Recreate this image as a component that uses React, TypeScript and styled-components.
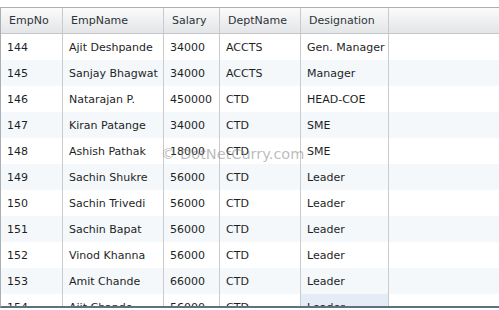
import React from "react";
import styled, { createGlobalStyle } from "styled-components";

const Global = createGlobalStyle`
  html, body { margin: 0; padding: 0; background: #ffffff; }
  body { font-family: "DejaVu Sans", Verdana, sans-serif; }
`;

const cols = "62px 101px 56px 81px 88px 1fr";

const Frame = styled.div`
  margin-top: 7px;
  height: 301px;
  box-sizing: border-box;
  border-top: 1px solid #a9afb5;
  border-left: 1px solid #a9afb5;
  border-bottom: 2px solid #5d717e;
  overflow: hidden;
  position: relative;
`;

const HeaderRow = styled.div`
  display: grid;
  grid-template-columns: ${cols};
  height: 26px;
  box-sizing: border-box;
  border-bottom: 1px solid #c3c7cb;
  background: linear-gradient(#fbfbfb, #e3e5e7);
`;

const HeadCell = styled.div`
  display: flex;
  align-items: center;
  padding-left: 8px;
  font-size: 11px;
  color: #2e3338;
  box-sizing: border-box;
  border-right: 1px solid #c8cbce;
  white-space: nowrap;
  overflow: hidden;
`;

const HeadFill = styled.div``;

const Row = styled.div<{ $alt: boolean }>`
  display: grid;
  grid-template-columns: ${cols};
  height: 26px;
  background: ${(p) => (p.$alt ? "#f4f8fb" : "#ffffff")};
`;

const Cell = styled.div<{ $hl?: boolean }>`
  display: flex;
  align-items: center;
  padding-left: 6px;
  font-size: 11px;
  color: #1f1f1f;
  box-sizing: border-box;
  border-right: 1px solid #cbcbcb;
  white-space: nowrap;
  overflow: hidden;
  background: ${(p) => (p.$hl ? "#e4ecf5" : "transparent")};
`;

const Fill = styled.div``;

const Watermark = styled.div`
  position: absolute;
  left: 160px;
  top: 138px;
  font-family: "DejaVu Sans", Verdana, sans-serif;
  font-size: 14.5px;
  color: rgba(130, 130, 130, 0.55);
  pointer-events: none;
  white-space: nowrap;
`;

const data: [string, string, string, string, string][] = [
  ["144", "Ajit Deshpande", "34000", "ACCTS", "Gen. Manager"],
  ["145", "Sanjay Bhagwat", "34000", "ACCTS", "Manager"],
  ["146", "Natarajan P.", "450000", "CTD", "HEAD-COE"],
  ["147", "Kiran Patange", "34000", "CTD", "SME"],
  ["148", "Ashish Pathak", "18000", "CTD", "SME"],
  ["149", "Sachin Shukre", "56000", "CTD", "Leader"],
  ["150", "Sachin Trivedi", "56000", "CTD", "Leader"],
  ["151", "Sachin Bapat", "56000", "CTD", "Leader"],
  ["152", "Vinod Khanna", "56000", "CTD", "Leader"],
  ["153", "Amit Chande", "66000", "CTD", "Leader"],
  ["154", "Ajit Chande", "56000", "CTD", "Leader"],
];

const headers = ["EmpNo", "EmpName", "Salary", "DeptName", "Designation"];

export default function App() {
  return (
    <>
      <Global />
      <Frame>
        <HeaderRow>
          {headers.map((h) => (
            <HeadCell key={h}>{h}</HeadCell>
          ))}
          <HeadFill />
        </HeaderRow>
        {data.map((r, i) => (
          <Row key={r[0]} $alt={i % 2 === 1}>
            {r.map((v, j) => (
              <Cell key={j} $hl={i === 10 && j === 4}>
                {v}
              </Cell>
            ))}
            <Fill />
          </Row>
        ))}
        <Watermark>© DotNetCurry.com</Watermark>
      </Frame>
    </>
  );
}
